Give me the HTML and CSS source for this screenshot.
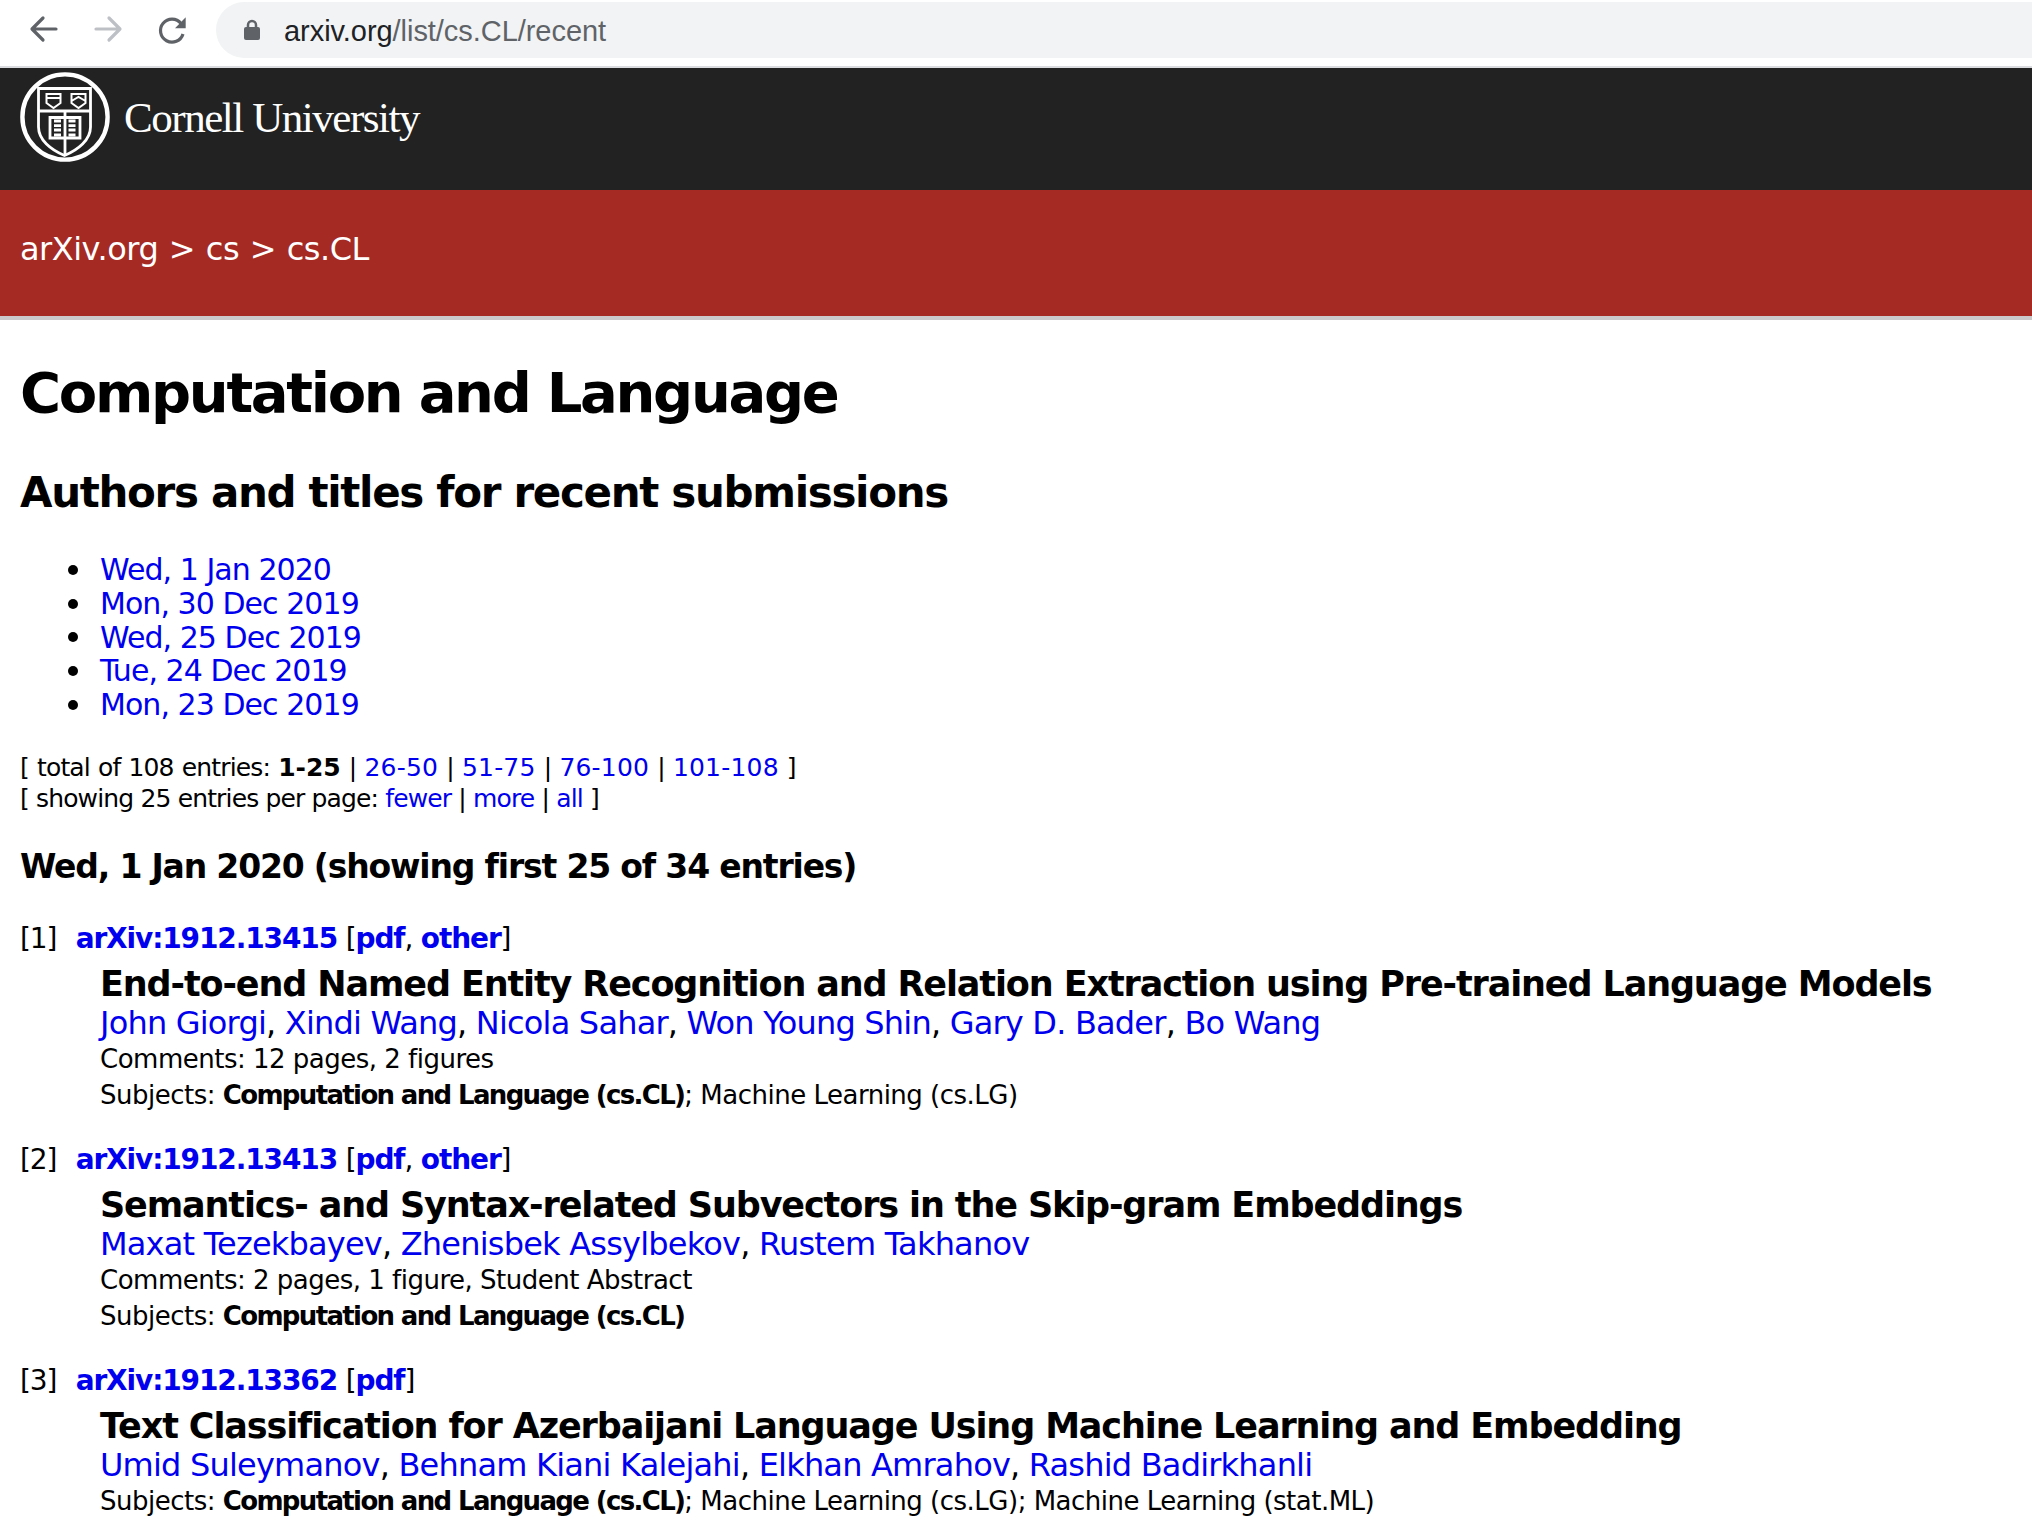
FILE: index.html
```html
<!DOCTYPE html>
<html lang="en">
<head>
<meta charset="utf-8">
<title>Computation and Language authors/titles recent submissions</title>
<link rel="stylesheet" href="styles.css">
</head>
<body>
<div class="toolbar">
  <div class="nav-icons">
    <svg class="nav" viewBox="0 0 32 32"><path d="M28 15H4.500M15 4L4 15l11 11" class="ic-dark"/></svg>
    <svg class="nav" viewBox="0 0 32 32"><path d="M4 15h23.500M17 4l11 11-11 11" class="ic-light"/></svg>
    <svg class="nav" viewBox="0 0 32 32"><path d="M25 9.500A11.500 11.500 0 1 0 27 20" class="ic-reload"/><path d="M29.700 3.300v11H19z" class="ic-fill"/></svg>
  </div>
  <div class="omnibox">
    <svg class="lock" viewBox="0 0 16 22"><path d="M4 9V6a4 4 0 0 1 8 0v3" class="ic-lock"/><rect x="0" y="8" width="16" height="13" rx="2" class="ic-fill"/></svg>
    <span class="url"><span class="host">arxiv.org</span>/list/cs.CL/recent</span>
  </div>
</div>
<header class="cornell">
  <svg class="seal" viewBox="0 0 90 90">
    <g class="seal-line">
      <circle cx="45" cy="45" r="42.600" class="thick"/>
      <path d="M18.500 16.500H70.500V55C70.500 68 58 78 44.500 83.500 31 78 18.500 68 18.500 55Z" class="mid"/>
      <path d="M18.500 39H70.500M45 39V83" class="mid"/>
      <path d="M26.500 22H40.500V31L33.500 36 26.500 31ZM26.500 26H40.500"/>
      <path d="M51.500 22H65.500V31L58.500 36 51.500 31ZM51.500 29L58.500 25 65.500 29"/>
      <path d="M30 45.500H60V66H30Z" class="mid"/>
      <path d="M34 49H41M34 53.700H41M34 58H41M34 63H41M48.500 49H55.500M48.500 53.700H55.500M48.500 58H55.500M48.500 63H55.500" class="mid"/>
    </g>
  </svg>
  <span class="wordmark">Cornell University</span>
</header>
<nav class="crumbs"><a href="#">arXiv.org</a> &gt; <a href="#">cs</a> &gt; <a href="#">cs.CL</a></nav>
<main class="content">
  <h1 class="title">Computation and Language</h1>
  <h2 class="subtitle">Authors and titles for recent submissions</h2>
  <ul class="dates">
    <li><a href="#">Wed, 1 Jan 2020</a></li>
    <li><a href="#">Mon, 30 Dec 2019</a></li>
    <li><a href="#">Wed, 25 Dec 2019</a></li>
    <li><a href="#">Tue, 24 Dec 2019</a></li>
    <li><a href="#">Mon, 23 Dec 2019</a></li>
  </ul>
  <div class="paging">
    <div class="range">[ total of 108 entries: <b>1-25</b> | <a href="#">26-50</a> | <a href="#">51-75</a> | <a href="#">76-100</a> | <a href="#">101-108</a> ]</div>
    <div>[ showing 25 entries per page: <a href="#">fewer</a> | <a href="#">more</a> | <a href="#">all</a> ]</div>
  </div>
  <h3 class="day">Wed, 1 Jan 2020 (showing first 25 of 34 entries)</h3>
  <article class="entry">
    <div class="idline"><span class="num">[1]</span> <a href="#">arXiv:1912.13415</a> <span class="bracket">[</span><a href="#">pdf</a><span class="bracket">,</span> <a href="#">other</a><span class="bracket">]</span></div>
    <div class="meta">
      <div class="etitle">End-to-end Named Entity Recognition and Relation Extraction using Pre-trained Language Models</div>
      <div class="authors"><a href="#">John Giorgi</a>, <a href="#">Xindi Wang</a>, <a href="#">Nicola Sahar</a>, <a href="#">Won Young Shin</a>, <a href="#">Gary D. Bader</a>, <a href="#">Bo Wang</a></div>
      <div class="small">Comments: 12 pages, 2 figures</div>
      <div class="small">Subjects: <b>Computation and Language (cs.CL)</b>; Machine Learning (cs.LG)</div>
    </div>
  </article>
  <article class="entry">
    <div class="idline"><span class="num">[2]</span> <a href="#">arXiv:1912.13413</a> <span class="bracket">[</span><a href="#">pdf</a><span class="bracket">,</span> <a href="#">other</a><span class="bracket">]</span></div>
    <div class="meta">
      <div class="etitle">Semantics- and Syntax-related Subvectors in the Skip-gram Embeddings</div>
      <div class="authors"><a href="#">Maxat Tezekbayev</a>, <a href="#">Zhenisbek Assylbekov</a>, <a href="#">Rustem Takhanov</a></div>
      <div class="small">Comments: 2 pages, 1 figure, Student Abstract</div>
      <div class="small">Subjects: <b>Computation and Language (cs.CL)</b></div>
    </div>
  </article>
  <article class="entry">
    <div class="idline"><span class="num">[3]</span> <a href="#">arXiv:1912.13362</a> <span class="bracket">[</span><a href="#">pdf</a><span class="bracket">]</span></div>
    <div class="meta">
      <div class="etitle">Text Classification for Azerbaijani Language Using Machine Learning and Embedding</div>
      <div class="authors"><a href="#">Umid Suleymanov</a>, <a href="#">Behnam Kiani Kalejahi</a>, <a href="#">Elkhan Amrahov</a>, <a href="#">Rashid Badirkhanli</a></div>
      <div class="small">Subjects: <b>Computation and Language (cs.CL)</b>; Machine Learning (cs.LG); Machine Learning (stat.ML)</div>
    </div>
  </article>
</main>
</body>
</html>
```
FILE: styles.css
```css
* { box-sizing: border-box; }
html, body { margin: 0; padding: 0; background: #fff; overflow: hidden; }
body { font-family: "DejaVu Sans", sans-serif; color: #000; height: 1540px; }
a { color: #0000ee; text-decoration: none; }

.toolbar { height: 68px; display: flex; padding-top: 2px; border-bottom: 2px solid #dadce0; }
.nav-icons { width: 216px; height: 56px; display: flex; align-items: center; gap: 32px; padding-left: 28px; }
.nav { width: 32px; height: 32px; flex: none; }
.ic-dark, .ic-light, .ic-reload { fill: none; stroke-width: 3.200; stroke-linecap: round; stroke-linejoin: round; }
.ic-dark, .ic-reload { stroke: #5f6368; }
.ic-reload { stroke-linecap: butt; }
.ic-light { stroke: #bdc1c6; }
.ic-fill { fill: #5f6368; }
.ic-lock { fill: none; stroke: #5f6368; stroke-width: 2.500; }
.omnibox { flex: 1; height: 56px; background: #f1f3f4; border-radius: 28px 0 0 28px; display: flex; align-items: center; padding-left: 28px; gap: 24px; }
.lock { width: 16px; height: 22px; }
.url { font-family: "Liberation Sans", sans-serif; font-size: 29px; color: #5f6368; padding-top: 2px; letter-spacing: -0.050px; }
.host { color: #202124; }

.cornell { height: 122px; background: #222; display: flex; align-items: flex-start; padding: 4px 0 0 20px; gap: 14px; }
.seal { width: 90px; height: 90px; flex: none; }
.seal-line { fill: none; stroke: #fff; stroke-width: 2; }
.thick { stroke-width: 4.400; }
.mid { stroke-width: 2.800; }
.wordmark { font-family: "Liberation Serif", serif; font-size: 43px; letter-spacing: -1.450px; color: #fff; margin-top: 22px; line-height: 48px; }

.crumbs { height: 130px; background: #a52a24; border-bottom: 4px solid #cbc9c9; color: #fff; font-size: 32px; letter-spacing: -0.500px; word-spacing: 1px; line-height: 118px; padding-left: 20px; }
.crumbs a { color: #fff; }

.content { padding-left: 20px; }
.title { margin: 0; font-size: 56px; letter-spacing: -2.300px; line-height: 70px; padding-top: 38px; font-weight: bold; }
.subtitle { margin: 0; font-size: 42px; letter-spacing: -1.330px; line-height: 50px; padding-top: 40px; font-weight: bold; }
.dates { margin: 0; padding: 35px 0 0 80px; font-size: 30px; letter-spacing: -0.950px; line-height: 33.800px; list-style: none; }
.dates li { display: flex; align-items: center; }
.dates li::before { content: ""; width: 10px; height: 10px; border-radius: 50%; background: #000; margin-left: -32px; margin-right: 22px; flex: none; }
.paging { font-size: 25px; letter-spacing: -0.850px; line-height: 31px; padding-top: 30px; }
.range { word-spacing: 1px; }
.range a { letter-spacing: 0.200px; }
.range b { letter-spacing: 0; }
.day { margin: 0; font-size: 33px; letter-spacing: -1.170px; line-height: 40px; padding: 33px 0 5px; font-weight: bold; }
.entry { padding-top: 27px; }
.idline { font-size: 28px; letter-spacing: -1.120px; line-height: 40px; font-weight: bold; }
.num { display: inline-block; width: 47px; }
.num, .bracket { font-weight: normal; }
.meta { padding-left: 80px; }
.etitle { font-size: 35px; letter-spacing: -1.120px; line-height: 44px; padding-top: 3px; box-sizing: content-box; font-weight: bold; }
.authors { font-size: 32px; letter-spacing: -0.800px; line-height: 34px; padding-bottom: 1px; box-sizing: content-box; }
.small { font-size: 26px; letter-spacing: -0.500px; line-height: 36px; }
.small b { letter-spacing: -1.650px; }
```
